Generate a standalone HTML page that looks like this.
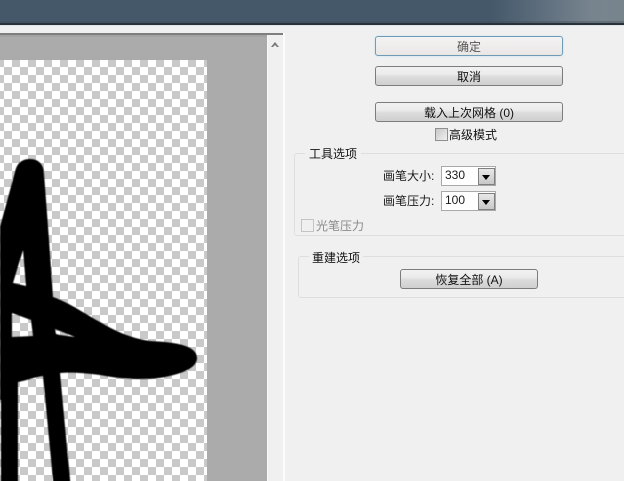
<!DOCTYPE html>
<html><head><meta charset="utf-8">
<style>
html,body{margin:0;padding:0}
body{width:624px;height:481px;overflow:hidden;position:relative;background:#f0f0f0;font:12px "Liberation Sans","WenQuanYi Zen Hei","Noto Sans CJK SC",sans-serif;color:#1a1a1a}
div{position:absolute;box-sizing:border-box}
.top{left:0;top:0;width:624px;height:23px;background:linear-gradient(90deg,#44586a 0,#44586a 490px,#5d6d7c 540px,#77848f 590px,#78848c 624px)}
.btn{left:375px;width:188px;height:20px;border:1px solid #7c7c7c;border-radius:3px;background:linear-gradient(#f2f2f2 0,#ebebeb 40%,#dcdcdc 55%,#cfcfcf 100%);text-align:center;line-height:20px;color:#111}
.grp{border:1px solid #dedede;border-radius:3px}
.lbl{background:#f0f0f0;white-space:nowrap;line-height:14px}
.sel{width:55px;height:20px;background:#fff;border:1px solid #a9a9a9;padding-left:3px;line-height:17px;font-size:12px}
.arr{left:36px;top:1px;width:17px;height:17px;background:linear-gradient(#e8e8e8,#c8c8c8);border:1px solid #808080}
.arr:after{content:"";position:absolute;left:3px;top:6px;border:4px solid transparent;border-top:5px solid #000;border-bottom:0}
.cb{width:13px;height:13px;background:#f2f2f2;border:1px solid #8f8f8f}
</style></head><body>
<div class="top"></div>
<div style="left:0;top:21px;width:624px;height:2px;background:rgba(60,70,80,.35)"></div>
<div style="left:0;top:23px;width:624px;height:2px;background:#28323a"></div>
<div style="left:0;top:25px;width:624px;height:1px;background:#dfe3e6"></div>

<svg width="268" height="447" viewBox="0 34 268 447" style="position:absolute;left:0;top:34px;display:block">
<defs>
<pattern id="c" x="4" y="59" width="16" height="16" patternUnits="userSpaceOnUse">
<rect width="16" height="16" fill="#fff"/>
<rect x="8" y="0" width="8" height="8" fill="#c9c9c9"/>
<rect x="0" y="8" width="8" height="8" fill="#c9c9c9"/>
</pattern>
<filter id="b" x="-5%" y="-5%" width="110%" height="110%"><feGaussianBlur stdDeviation="0.6"/></filter>
</defs>
<rect x="0" y="34" width="268" height="447" fill="#ababab"/>
<rect x="0" y="60" width="207" height="421" fill="url(#c)"/>
<path fill="#000" fill-rule="evenodd" filter="url(#b)" d="M0,227 L15,172 C17,163 22,159 30,159 C39,159 44,165 44,174 L49,240 L53,297 C68,302 85,314 100,322 C115,331 130,338 150,341 C170,342 197,344 197,358 C197,367 185,373 165,377 C150,380 125,380 100,375 C85,373 70,372 60,373 L71,490 L54,490 L43,376 C35,377 28,380 18,382 L18,490 L1,490 L1,400 L0,400 Z M12,313 L31,320 L33,336 L12,337 Z M55,329 L75,337 L60,335 L56,334 Z M23,250 L13,283 L26,286 Z"/>
</svg>

<div style="left:267px;top:33px;width:1px;height:448px;background:#f8f8f8"></div>
<div style="left:0;top:33px;width:283px;height:2px;background:#7f7f7f"></div>
<div style="left:0;top:35px;width:267px;height:2px;background:#a3a3a3"></div>
<div style="left:283px;top:33px;width:2px;height:448px;background:#fbfbfb"></div>
<svg width="10" height="8" style="position:absolute;left:270px;top:40px"><path d="M1,7 L5,2 L9,7 L7,7 L5,5 L3,7 Z" fill="#777"/></svg>

<div class="btn" style="top:36px;border-color:#6f9bb5;background:linear-gradient(#f4f3f3,#e9e7e6);box-shadow:0 0 2px #bfe3f5;color:#555">确定</div>
<div class="btn" style="top:66px">取消</div>
<div class="btn" style="top:102px">载入上次网格 (0)</div>
<div class="cb" style="left:435px;top:128px;background:linear-gradient(135deg,#c8c8c8,#f0f0f0)"></div>
<div class="lbl" style="left:449px;top:128px;color:#111">高级模式</div>

<div class="grp" style="left:294px;top:153px;width:340px;height:83px"></div>
<div class="lbl" style="left:305px;top:147px;padding:0 4px;color:#111">工具选项</div>
<div class="lbl" style="left:383px;top:169px;background:none">画笔大小:</div>
<div class="lbl" style="left:383px;top:194px;background:none">画笔压力:</div>
<div class="sel" style="left:441px;top:166px">330<div class="arr"></div></div>
<div class="sel" style="left:441px;top:191px">100<div class="arr"></div></div>
<div class="cb" style="left:301px;top:219px;background:#f0f0f0;border-color:#c4c4c4"></div>
<div class="lbl" style="left:316px;top:219px;background:none;color:#8a8a8a">光笔压力</div>

<div class="grp" style="left:298px;top:256px;width:340px;height:42px"></div>
<div class="lbl" style="left:309px;top:251px;padding:0 3px;color:#111">重建选项</div>
<div class="btn" style="left:400px;top:269px;width:138px">恢复全部 (A)</div>
</body></html>
